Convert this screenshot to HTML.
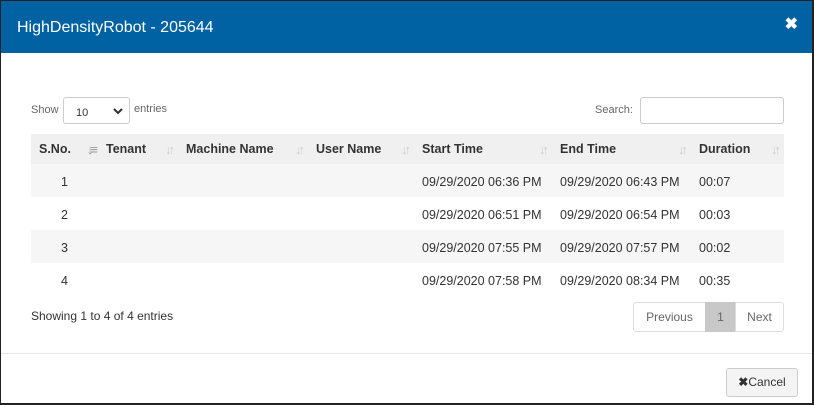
<!DOCTYPE html>
<html><head><style>
*{box-sizing:border-box;margin:0;padding:0}
body{width:814px;height:405px;background:#fff;font-family:"Liberation Sans",Arial,sans-serif;font-size:12px;color:#333;position:relative;overflow:hidden}
.frame{position:absolute;left:0;top:0;width:814px;height:405px;border:1px solid #222;border-right:2px solid #222;border-bottom:2px solid #222}
.hdr{position:absolute;left:1px;top:1px;width:811px;height:52px;background:#0062a3;color:#fff}
.hdr .t{position:absolute;left:16px;top:18px;font-size:16px}
.hdr .x{position:absolute;right:14px;top:13px;font-size:16px;font-weight:bold}
.abs{position:absolute}
.sel{position:absolute;left:63px;top:97px;width:67px;height:27px;border:1px solid #ccc;border-radius:3px;font-size:11px;padding:9px 0 0 12px}
.sel svg{position:absolute;right:6px;top:9px}
.search{position:absolute;left:640px;top:97px;width:144px;height:27px;border:1px solid #ccc;border-radius:3px}
table{position:absolute;left:31px;top:134px;width:753px;border-collapse:collapse;font-size:12.5px}
th{height:30px;background:#f0f0f0;text-align:left;font-weight:bold;padding-left:8px;position:relative;color:#333}
th .s{position:absolute;right:6px;top:8px;color:#ccc;font-size:13px;letter-spacing:-3px;font-weight:bold}
td{height:33px;padding-left:8px;padding-top:2px}
tr.o td{background:#f6f6f6}
td.n{padding-left:30px}
.pg{position:absolute;top:302px;height:30px;border:1px solid #ddd;color:#666;font-size:12px;line-height:28px;text-align:center}
.btn{position:absolute;left:726px;top:368px;width:72px;height:29px;border:1px solid #ccc;border-radius:3px;background:#f4f4f4;line-height:27px;text-align:center;font-size:12px}
</style></head><body>
<div class="hdr"><div class="t">HighDensityRobot - 205644</div><div class="x">✖</div></div>
<div class="abs" style="left:31px;top:104px;color:#666;font-size:11px">Show</div>
<div class="sel">10<svg width="10" height="8" viewBox="0 0 10 8"><path d="M1 2l4 4 4-4" stroke="#333" stroke-width="2" fill="none"/></svg></div>
<div class="abs" style="left:134px;top:103px;color:#666;font-size:11px">entries</div>
<div class="abs" style="left:595px;top:104px;color:#666;font-size:11px">Search:</div>
<div class="search"></div>
<table>
<tr><th style="width:67px">S.No.<span class="s" style="color:#999;right:3px">↓≡</span></th><th style="width:80px">Tenant<span class="s">↓↑</span></th><th style="width:130px">Machine Name<span class="s">↓↑</span></th><th style="width:106px">User Name<span class="s">↓↑</span></th><th style="width:138px">Start Time<span class="s">↓↑</span></th><th style="width:139px">End Time<span class="s">↓↑</span></th><th>Duration<span class="s">↓↑</span></th></tr>
<tr class="o"><td class="n">1</td><td></td><td></td><td></td><td>09/29/2020 06:36 PM</td><td>09/29/2020 06:43 PM</td><td>00:07</td></tr>
<tr><td class="n">2</td><td></td><td></td><td></td><td>09/29/2020 06:51 PM</td><td>09/29/2020 06:54 PM</td><td>00:03</td></tr>
<tr class="o"><td class="n">3</td><td></td><td></td><td></td><td>09/29/2020 07:55 PM</td><td>09/29/2020 07:57 PM</td><td>00:02</td></tr>
<tr><td class="n">4</td><td></td><td></td><td></td><td>09/29/2020 07:58 PM</td><td>09/29/2020 08:34 PM</td><td>00:35</td></tr>
</table>
<div class="abs" style="left:31px;top:309px">Showing 1 to 4 of 4 entries</div>
<div class="pg" style="left:633px;width:73px;border-radius:3px 0 0 3px">Previous</div>
<div class="pg" style="left:705px;width:31px;background:#c8c8c8;border-color:#c8c8c8">1</div>
<div class="pg" style="left:735px;width:49px;border-radius:0 3px 3px 0">Next</div>
<div class="abs" style="left:1px;top:353px;width:811px;border-top:1px solid #e5e5e5"></div>
<div class="btn"><b>✖</b>Cancel</div>
<div class="frame"></div>
</body></html>
